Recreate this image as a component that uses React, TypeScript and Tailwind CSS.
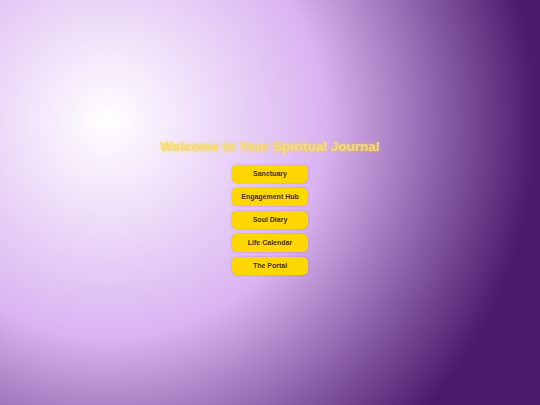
import React from "react";

const links = ["Sanctuary", "Engagement Hub", "Soul Diary", "Life Calendar", "The Portal"];

export default function App() {
  return (
    <div
      className="w-[540px] h-[405px] overflow-hidden flex flex-col items-center justify-center pt-[8px] bg-[radial-gradient(circle_at_20%_30%,#ffffff_0%,#dab3f1_42%,#4a1a6b_83%)]"
      style={{ fontFamily: '"Liberation Sans", Arial, sans-serif' }}
    >
      <h1 className="text-[13.5px] leading-[16px] font-bold text-[#f4dc7c] [text-shadow:0_0_3px_rgba(255,215,0,0.8)] mb-[10px]">
        Welcome to Your Spiritual Journal
      </h1>
      <nav className="flex flex-col items-center gap-[5px]">
        {links.map((label) => (
          <button
            key={label}
            className="w-[76px] h-[18px] pt-px rounded-[5px] bg-[#ffd700] text-[#4a2c2c] text-[7px] font-bold shadow-[0_0_2px_rgba(120,60,140,0.4)] flex items-center justify-center"
          >
            {label}
          </button>
        ))}
      </nav>
    </div>
  );
}
